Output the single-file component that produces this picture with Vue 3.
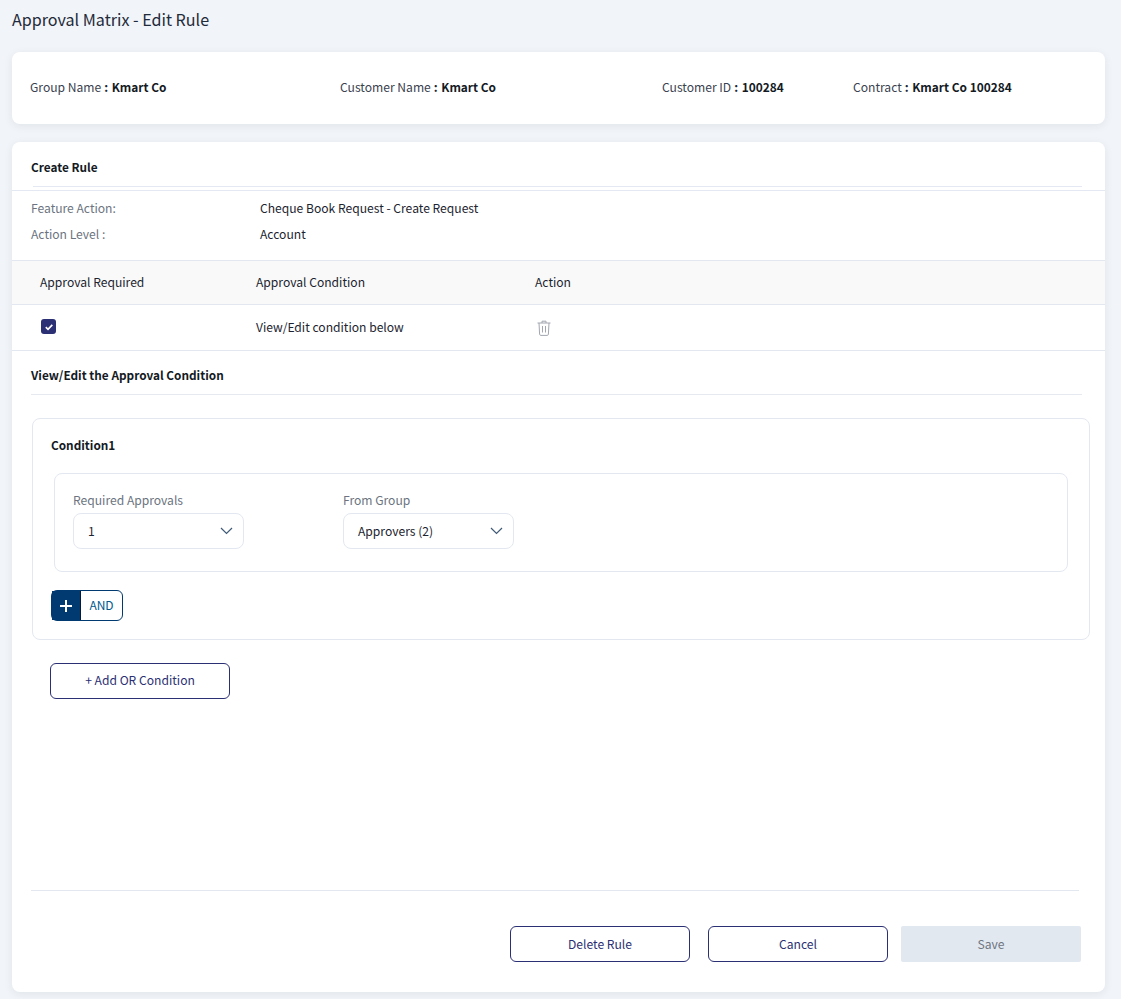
<script setup>
const info = [
  { label: 'Group Name', value: 'Kmart Co', cls: 'i1' },
  { label: 'Customer Name', value: 'Kmart Co', cls: 'i2' },
  { label: 'Customer ID', value: '100284', cls: 'i3' },
  { label: 'Contract', value: 'Kmart Co 100284', cls: 'i4' },
]
const selects = [
  { label: 'Required Approvals', value: '1' },
  { label: 'From Group', value: 'Approvers (2)' },
]
</script>

<template>
  <div class="page">
    <h1 class="title">Approval Matrix - Edit Rule</h1>

    <section class="card info">
      <div v-for="item in info" :key="item.label" class="info-item" :class="item.cls">
        <span class="info-label">{{ item.label }}</span><span class="colon">:</span>
        <b class="info-value">{{ item.value }}</b>
      </div>
    </section>

    <section class="card main">
      <div class="head-wrap">
        <h2 class="heading create">Create Rule</h2>
      </div>
      <div class="meta">
        <div class="meta-row"><span class="meta-label">Feature Action:</span><span>Cheque Book Request - Create Request</span></div>
        <div class="meta-row"><span class="meta-label">Action Level :</span><span>Account</span></div>
      </div>

      <div class="row row-head">
        <span class="c1">Approval Required</span>
        <span class="c2">Approval Condition</span>
        <span>Action</span>
      </div>
      <div class="row row-body">
        <span class="c1 c1-box">
          <span class="check">
            <svg width="10" height="10" viewBox="0 0 10 10"><path d="M1.8 5.2 4 7.3 8.3 2.8" fill="none" stroke="#fff" stroke-width="1.7"/></svg>
          </span>
        </span>
        <span class="c2">View/Edit condition below</span>
        <svg class="trash" width="14" height="16" viewBox="0 0 14 16" fill="none" stroke="#a3a6b0" stroke-width="1">
          <path d="M.5 3h13M5 3V1.2h4V3M2 3l.6 11.2c0 .7.5 1.2 1.2 1.2h6.4c.7 0 1.2-.5 1.2-1.2L12 3M5.5 6v6.5M8.5 6v6.5"/>
        </svg>
      </div>

      <div class="section-wrap">
        <h2 class="heading edit">View/Edit the Approval Condition</h2>
      </div>

      <div class="condition">
        <h3 class="cond-title">Condition1</h3>
        <div class="cond-inner">
          <div v-for="s in selects" :key="s.label" class="field">
            <label class="field-label">{{ s.label }}</label>
            <div class="select">
              <span>{{ s.value }}</span>
              <svg width="13" height="8" viewBox="0 0 13 8" fill="none" stroke="#3f5a78" stroke-width="1.2"><path d="M1 1l5.5 5.5L12 1"/></svg>
            </div>
          </div>
        </div>
        <div class="and-btn">
          <span class="plus">
            <svg width="12" height="12" viewBox="0 0 12 12" stroke="#fff" stroke-width="2"><path d="M6 0v12M0 6h12"/></svg>
          </span>
          <span class="and-text">AND</span>
        </div>
      </div>

      <button class="btn or-btn">+ Add OR Condition</button>

      <div class="footer">
        <button class="btn">Delete Rule</button>
        <button class="btn">Cancel</button>
        <button class="btn save">Save</button>
      </div>
    </section>
  </div>
</template>

<style>
html, body { margin: 0; background: #f1f4f8; }
</style>

<style scoped>
.page {
  box-sizing: border-box;
  height: 999px;
  padding: 0 16px 7px 12px;
  background: #f1f4f8;
  font-family: "Noto Sans CJK SC", "Open Sans", sans-serif;
  font-size: 12.1px;
  line-height: 18px;
  color: #1c2430;
  overflow: hidden;
}
.title {
  margin: 0;
  padding-top: 7px;
  height: 52px;
  box-sizing: border-box;
  font-size: 16.1px;
  line-height: 24px;
  font-weight: 400;
  color: #1f2a3a;
}
.card {
  background: #fff;
  border-radius: 8px;
  box-shadow: 0 2px 8px rgba(40, 60, 90, .08);
}
.info {
  height: 72px;
  display: grid;
  grid-template-columns: 310px 322px 191px 1fr;
  align-items: center;
  padding: 0 0 2px 18px;
  box-sizing: border-box;
  margin-bottom: 18px;
}
.info-label { color: #3a4250; }
.colon { margin: 0 3.5px 0 3px; font-weight: 600; }
.info-value { font-size: 11.9px; font-weight: 600; color: #141a24; }
.main { height: 850px; display: flex; flex-direction: column; }
.head-wrap {
  height: 49px;
  border-bottom: 1px solid #e3e8f3;
  box-sizing: border-box;
  padding: 0 23px 0 21px;
}
.heading {
  margin: 0;
  font-size: 11.8px;
  line-height: 18px;
  font-weight: 600;
  color: #141a24;
}
.create {
  height: 45px;
  padding-top: 16px;
  box-sizing: border-box;
  border-bottom: 1px solid #e3e8f3;
  text-indent: -2px;
}
.meta { padding: 4px 19px 0; height: 69px; box-sizing: border-box; }
.meta-row { display: flex; height: 26px; align-items: center; }
.meta-label { width: 229px; color: #6b7480; }
.row { display: flex; align-items: center; padding: 0 0 2px 28px; border-bottom: 1px solid #e3e8f0; box-sizing: border-box; }
.row-head { height: 45px; background: #f9f9f9; border-top: 1px solid #e3e8f0; }
.row-body { height: 46px; }
.c1 { width: 216px; }
.c1-box { display: flex; }
.c2 { width: 279px; }
.check {
  width: 15px;
  height: 15px;
  margin-left: 1px;
  border-radius: 3px;
  background: #2b2f73;
  display: flex;
  align-items: center;
  justify-content: center;
}
.trash { margin: 2px 0 0 2px; }
.section-wrap { padding: 0 23px 0 19px; }
.edit {
  height: 44px;
  padding-top: 15px;
  box-sizing: border-box;
  border-bottom: 1px solid #e6e9ef;
}
.condition {
  margin: 23px 15px 0 20px;
  height: 222px;
  box-sizing: border-box;
  border: 1px solid #e3e8f0;
  border-radius: 8px;
  padding: 17px 21px 0 18px;
}
.cond-title { margin: 0 0 19px; font-size: 11.8px; line-height: 18px; font-weight: 600; color: #141a24; }
.cond-inner {
  margin-left: 3px;
  height: 99px;
  box-sizing: border-box;
  border: 1px solid #e3e8f0;
  border-radius: 8px;
  padding: 17px 18px 0;
  display: flex;
  gap: 99px;
}
.field { width: 171px; }
.field-label { display: block; color: #6b7480; margin-bottom: 4px; }
.select {
  height: 36px;
  box-sizing: border-box;
  border: 1px solid #e3e8f0;
  border-radius: 8px;
  padding: 0 10px 0 14px;
  display: flex;
  align-items: center;
  justify-content: space-between;
}
.and-btn {
  margin-top: 18px;
  width: 72px;
  height: 31px;
  box-sizing: border-box;
  display: flex;
  border: 1px solid #003a70;
  border-radius: 6px;
}
.plus {
  width: 28px;
  height: 28px;
  padding-top: 1px;
  background: #003a70;
  border-right: 1px solid #0a1a30;
  display: flex;
  align-items: center;
  justify-content: center;
  box-sizing: content-box;
}
.and-text { flex: 1; text-align: center; line-height: 28px; font-size: 12px; color: #005a8c; }
.btn {
  width: 180px;
  height: 36px;
  box-sizing: border-box;
  background: #fff;
  border: 1px solid #2b2f73;
  border-radius: 6px;
  font: inherit;
  color: #2b2f73;
  padding: 0;
}
.or-btn { margin: 23px 0 0 38px; padding-bottom: 2px; }
.footer {
  margin: auto 26px 30px 19px;
  height: 71px;
  border-top: 1px solid #e3e8f0;
  display: flex;
  justify-content: flex-end;
  align-items: flex-end;
  gap: 18px;
}
.save {
  background: #e2e8f0;
  border: 0;
  border-radius: 2px;
  color: #6f7680;
  margin-left: -5px;
  margin-right: -2px;
}
</style>
